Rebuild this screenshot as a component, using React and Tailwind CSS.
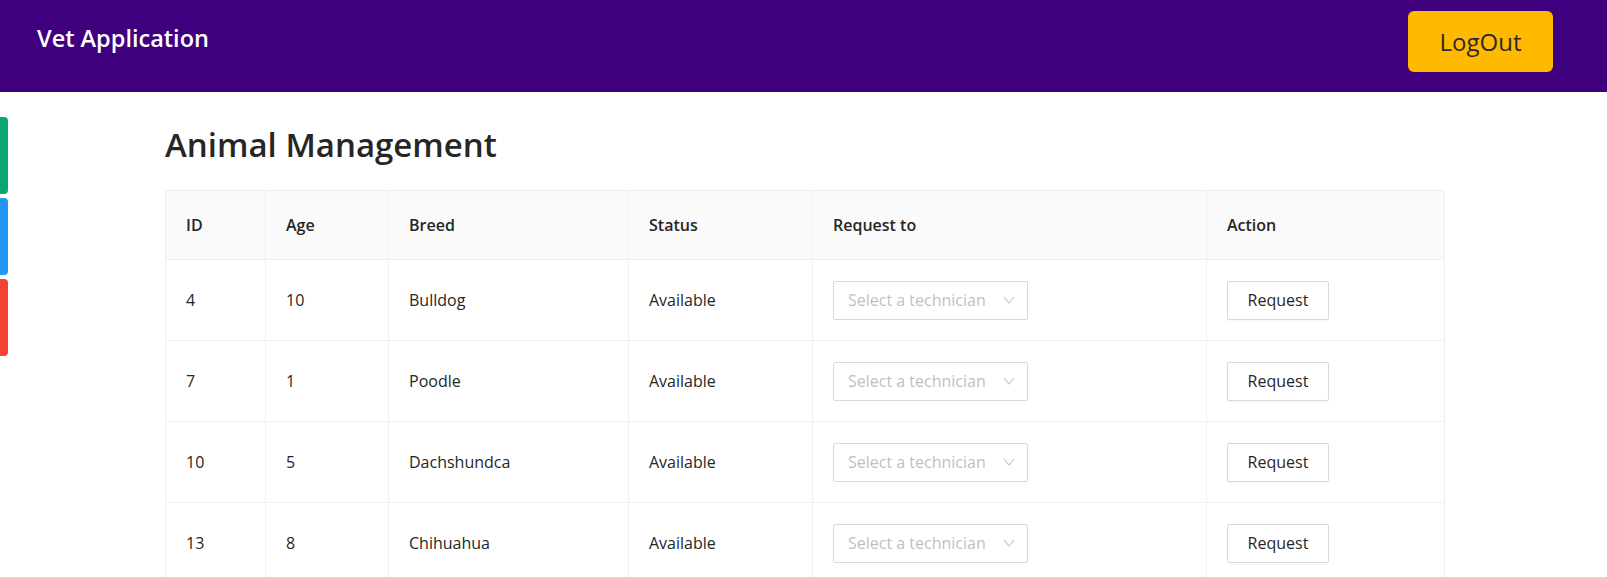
import React from "react";

const rows = [
  { id: 4, age: 10, breed: "Bulldog", status: "Available" },
  { id: 7, age: 1, breed: "Poodle", status: "Available" },
  { id: 10, age: 5, breed: "Dachshundca", status: "Available" },
  { id: 13, age: 8, breed: "Chihuahua", status: "Available" },
];

function Chevron() {
  return (
    <svg width="12" height="8" viewBox="0 0 12 8" fill="none" className="shrink-0">
      <polyline points="1,1 6,7 11,1" stroke="#bfbfbf" strokeWidth="1.1" fill="none" />
    </svg>
  );
}

export default function App() {
  return (
    <div className="min-h-[577px] bg-white text-[#262626]" style={{ fontFamily: '"Open Sans", "Noto Sans", sans-serif' }}>
      <header className="h-[92px] bg-[#3f007e] flex items-start justify-between pl-[37px] pr-[54px]">
        <div className="mt-[22px] text-white font-semibold text-[23.5px] leading-[32px]">Vet Application</div>
        <button className="mt-[11px] w-[145px] h-[61px] rounded-[6px] bg-[#ffba00] text-[#2a2a2a] text-[24px]">LogOut</button>
      </header>
      <div className="flex">
        <div className="w-[8px] pt-[25px] flex flex-col gap-[4px]">
          <div className="h-[77px] rounded-r-[4px] bg-[#0aa86e]"></div>
          <div className="h-[77px] rounded-r-[4px] bg-[#2196f3]"></div>
          <div className="h-[77px] rounded-r-[4px] bg-[#f44336]"></div>
        </div>
        <main className="ml-[157px] w-[1279px]">
          <h1 className="mt-[31px] text-[33px] leading-[44px] font-semibold text-[#262626]">Animal Management</h1>
          <table className="mt-[23px] w-[1279px] table-fixed border-collapse text-[16px]">
            <colgroup>
              <col className="w-[100px]" />
              <col className="w-[123px]" />
              <col className="w-[240px]" />
              <col className="w-[184px]" />
              <col className="w-[394px]" />
              <col className="w-[238px]" />
            </colgroup>
            <thead>
              <tr className="bg-[#fafafa] h-[69px]">
                {["ID", "Age", "Breed", "Status", "Request to", "Action"].map((h) => (
                  <th key={h} className="border border-[#f0f0f0] px-[20px] text-left font-semibold text-[#262626]">{h}</th>
                ))}
              </tr>
            </thead>
            <tbody>
              {rows.map((r) => (
                <tr key={r.id} className="h-[81px]">
                  <td className="border border-[#f0f0f0] px-[20px]">{r.id}</td>
                  <td className="border border-[#f0f0f0] px-[20px]">{r.age}</td>
                  <td className="border border-[#f0f0f0] px-[20px]">{r.breed}</td>
                  <td className="border border-[#f0f0f0] px-[20px]">{r.status}</td>
                  <td className="border border-[#f0f0f0] px-[20px]">
                    <div className="w-[195px] h-[39px] border border-[#d9d9d9] rounded-[2px] flex items-center justify-between pl-[14px] pr-[12px]">
                      <span className="text-[#bfbfbf] whitespace-nowrap">Select a technician</span>
                      <Chevron />
                    </div>
                  </td>
                  <td className="border border-[#f0f0f0] px-[20px]">
                    <button className="w-[102px] h-[39px] border border-[#d9d9d9] rounded-[2px] bg-white text-[#262626] shadow-[0_2px_0_rgba(0,0,0,0.02)]">Request</button>
                  </td>
                </tr>
              ))}
            </tbody>
          </table>
        </main>
      </div>
    </div>
  );
}
